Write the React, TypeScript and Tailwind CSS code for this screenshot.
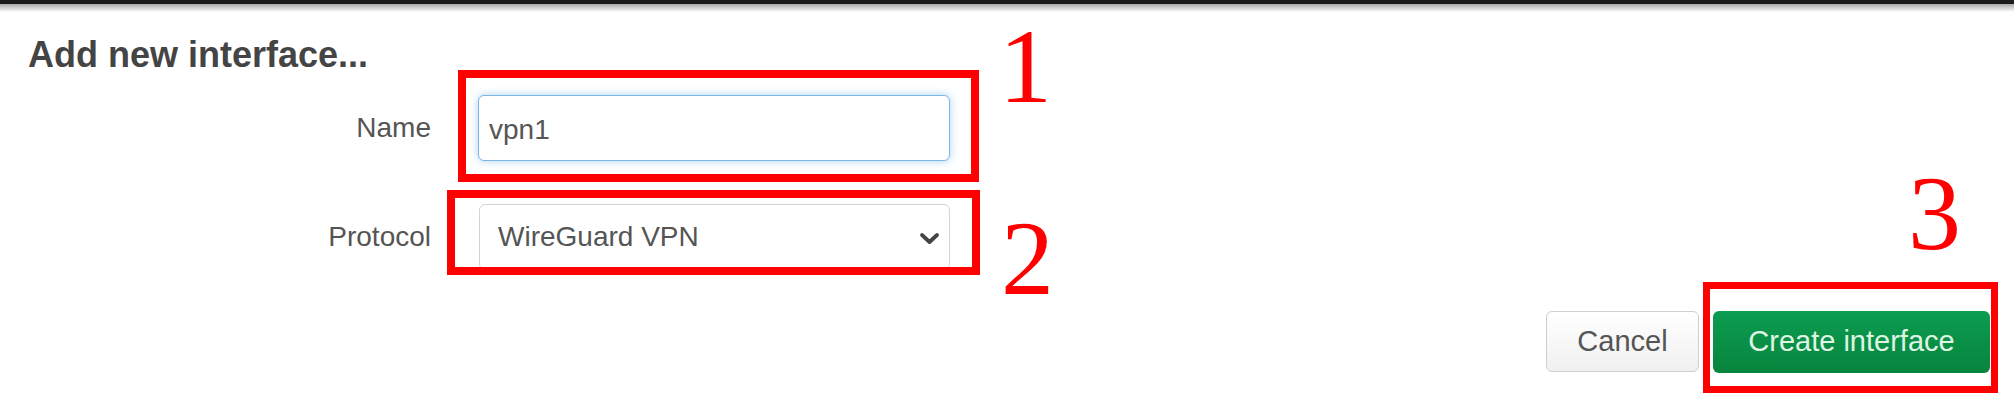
import { FC } from 'react';

const font = { fontFamily: '"Liberation Sans", Arial, sans-serif' };

/**
 * Add new interface dialog (annotated screenshot)
 */
const App: FC = () => {
  return (
    <div
      className="relative w-[2014px] h-[402px] overflow-hidden bg-white font-['Liberation_Sans',Arial,sans-serif]"
      style={font}
    >
      {/* Top edge of the overlay */}
      <div className="h-[4px] bg-[#1c1c1c]" />
      <div className="h-[8px] bg-gradient-to-b from-[#a8a8a8] to-white" />

      {/* Title */}
      <h3 className="mt-[25px] pl-[28px] text-[36px] leading-none font-bold text-[#444]">
        Add new interface...
      </h3>

      {/* Name row */}
      <div className="mt-[22px] flex items-center">
        <label className="w-[431px] text-right text-[28px] leading-none text-[#555]">
          Name
        </label>
        <div className="ml-[47px] flex h-[66px] w-[472px] items-center rounded-[6px] border border-[#7fb5e4] bg-white pl-[10px] pt-[3px] text-[28px] text-[#555] shadow-[0_0_9px_rgba(102,175,233,0.55)]">
          vpn1
        </div>
      </div>

      {/* Protocol row */}
      <div className="mt-[43px] flex items-center">
        <label className="w-[431px] text-right text-[28px] leading-none text-[#555]">
          Protocol
        </label>
        <div className="ml-[48px] flex h-[66px] w-[471px] items-center justify-between rounded-[6px] border border-[#d4d4d4] bg-white pl-[18px] pr-[9px] text-[28px] text-[#555]">
          <span>WireGuard VPN</span>
          <svg width="21" height="13" viewBox="0 0 21 13" className="mt-[2px]">
            <polyline
              points="3,3 10.5,10 18,3"
              fill="none"
              stroke="#444"
              strokeWidth="3.8"
              strokeLinecap="round"
              strokeLinejoin="round"
            />
          </svg>
        </div>
      </div>

      {/* Actions */}
      <div className="mt-[41px] flex justify-end gap-[14px] pr-[24px]">
        <button className="h-[61px] w-[153px] rounded-[6px] border border-[#cfcfcf] bg-gradient-to-b from-white to-[#f0f0f0] text-[29px] text-[#555]">
          Cancel
        </button>
        <button className="h-[62px] w-[277px] rounded-[6px] bg-gradient-to-b from-[#0c9d50] to-[#07843d] text-[29px] text-[#dff5e4]">
          Create interface
        </button>
      </div>

      {/* Annotation boxes */}
      <div className="absolute left-[458px] top-[70px] h-[112px] w-[521px] border-[8px] border-[#ff0000]" />
      <div className="absolute left-[447px] top-[190px] h-[85px] w-[533px] border-[8px] border-[#ff0000]" />
      <div className="absolute left-[1703px] top-[282px] h-[111px] w-[295px] border-[7px] border-[#ff0000]" />

      {/* Annotation numbers */}
      <span className="absolute left-[999px] top-[14px] text-[106px] leading-none text-[#ff0000] font-['Liberation_Serif',serif]">
        1
      </span>
      <span className="absolute left-[1001px] top-[206px] text-[106px] leading-none text-[#ff0000] font-['Liberation_Serif',serif]">
        2
      </span>
      <span className="absolute left-[1908px] top-[161px] text-[106px] leading-none text-[#ff0000] font-['Liberation_Serif',serif]">
        3
      </span>
    </div>
  );
};

export default App;
